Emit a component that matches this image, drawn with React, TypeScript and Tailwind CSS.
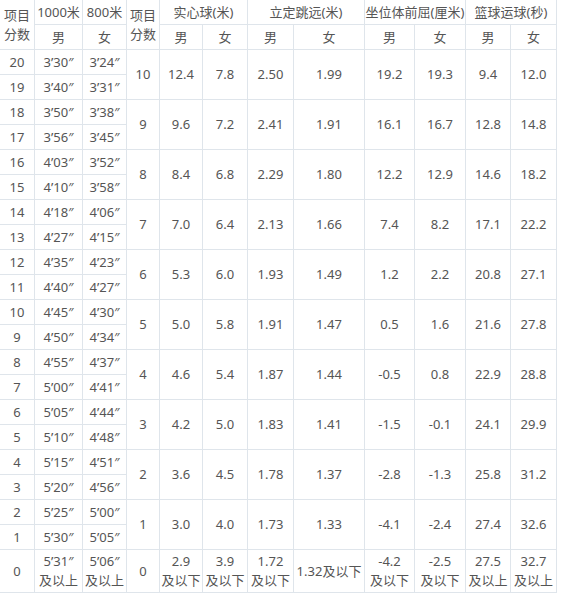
import React from "react";

const left: [string, string, string][] = [
  ["20", "3’30″", "3’24″"],
  ["19", "3’40″", "3’31″"],
  ["18", "3’50″", "3’38″"],
  ["17", "3’56″", "3’45″"],
  ["16", "4’03″", "3’52″"],
  ["15", "4’10″", "3’58″"],
  ["14", "4’18″", "4’06″"],
  ["13", "4’27″", "4’15″"],
  ["12", "4’35″", "4’23″"],
  ["11", "4’40″", "4’27″"],
  ["10", "4’45″", "4’30″"],
  ["9", "4’50″", "4’34″"],
  ["8", "4’55″", "4’37″"],
  ["7", "5’00″", "4’41″"],
  ["6", "5’05″", "4’44″"],
  ["5", "5’10″", "4’48″"],
  ["4", "5’15″", "4’51″"],
  ["3", "5’20″", "4’56″"],
  ["2", "5’25″", "5’00″"],
  ["1", "5’30″", "5’05″"],
];

const right: string[][] = [
  ["10", "12.4", "7.8", "2.50", "1.99", "19.2", "19.3", "9.4", "12.0"],
  ["9", "9.6", "7.2", "2.41", "1.91", "16.1", "16.7", "12.8", "14.8"],
  ["8", "8.4", "6.8", "2.29", "1.80", "12.2", "12.9", "14.6", "18.2"],
  ["7", "7.0", "6.4", "2.13", "1.66", "7.4", "8.2", "17.1", "22.2"],
  ["6", "5.3", "6.0", "1.93", "1.49", "1.2", "2.2", "20.8", "27.1"],
  ["5", "5.0", "5.8", "1.91", "1.47", "0.5", "1.6", "21.6", "27.8"],
  ["4", "4.6", "5.4", "1.87", "1.44", "-0.5", "0.8", "22.9", "28.8"],
  ["3", "4.2", "5.0", "1.83", "1.41", "-1.5", "-0.1", "24.1", "29.9"],
  ["2", "3.6", "4.5", "1.78", "1.37", "-2.8", "-1.3", "25.8", "31.2"],
  ["1", "3.0", "4.0", "1.73", "1.33", "-4.1", "-2.4", "27.4", "32.6"],
];

const widths = [35, 48, 44, 33, 43, 45, 46, 71, 50, 51, 45, 46];

const td = "border-r border-b border-[#dfe5eb] text-center align-middle p-0 leading-[19px]";

export default function App() {
  return (
    <div
      className="bg-white text-[13px] text-[#555]"
      style={{ fontFamily: '"Noto Sans", "Noto Sans CJK SC", sans-serif' }}
    >
      <table className="border-separate border-spacing-0 table-fixed w-[557px]">
        <colgroup>
          {widths.map((w, i) => (
            <col key={i} style={{ width: w }} />
          ))}
        </colgroup>
        <tbody>
          <tr className="h-[25px]">
            <td rowSpan={2} className={td}>
              项目
              <br />
              分数
            </td>
            <td className={td}>1000米</td>
            <td className={td}>800米</td>
            <td rowSpan={2} className={td}>
              项目
              <br />
              分数
            </td>
            <td colSpan={2} className={td}>实心球(米)</td>
            <td colSpan={2} className={td}>立定跳远(米)</td>
            <td colSpan={2} className={td}>坐位体前屈(厘米)</td>
            <td colSpan={2} className={td}>篮球运球(秒)</td>
          </tr>
          <tr className="h-[25px]">
            <td className={td}>男</td>
            <td className={td}>女</td>
            <td className={td}>男</td>
            <td className={td}>女</td>
            <td className={td}>男</td>
            <td className={td}>女</td>
            <td className={td}>男</td>
            <td className={td}>女</td>
            <td className={td}>男</td>
            <td className={td}>女</td>
          </tr>
          {left.map((l, i) => (
            <tr key={i} className="h-[25px]">
              <td className={td}>{l[0]}</td>
              <td className={td}>{l[1]}</td>
              <td className={td}>{l[2]}</td>
              {i % 2 === 0 &&
                right[i / 2].map((v, j) => (
                  <td key={j} rowSpan={2} className={td}>
                    {v}
                  </td>
                ))}
            </tr>
          ))}
          <tr className="h-[43px]">
            <td className={td}>0</td>
            <td className={td}>
              5’31″
              <br />
              及以上
            </td>
            <td className={td}>
              5’06″
              <br />
              及以上
            </td>
            <td className={td}>0</td>
            <td className={td}>
              2.9
              <br />
              及以下
            </td>
            <td className={td}>
              3.9
              <br />
              及以下
            </td>
            <td className={td}>
              1.72
              <br />
              及以下
            </td>
            <td className={td}>1.32及以下</td>
            <td className={td}>
              -4.2
              <br />
              及以下
            </td>
            <td className={td}>
              -2.5
              <br />
              及以下
            </td>
            <td className={td}>
              27.5
              <br />
              及以上
            </td>
            <td className={td}>
              32.7
              <br />
              及以上
            </td>
          </tr>
        </tbody>
      </table>
    </div>
  );
}
